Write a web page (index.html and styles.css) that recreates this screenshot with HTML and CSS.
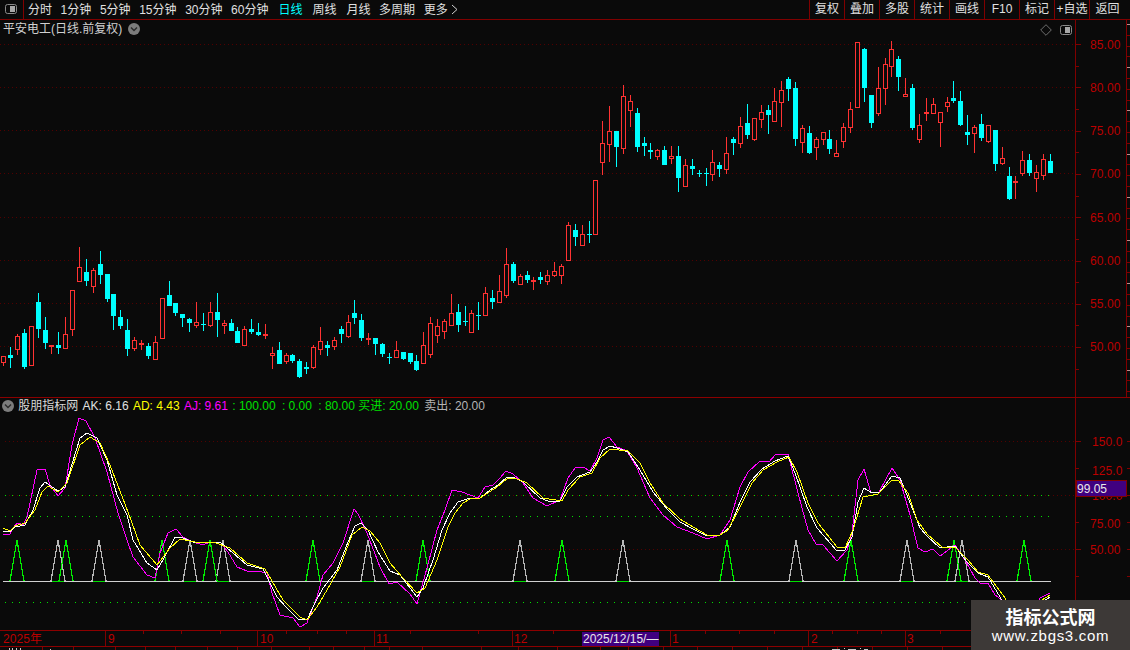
FILE: index.html
```html
<!DOCTYPE html>
<html lang="zh">
<head>
<meta charset="utf-8">
<title>平安电工 日线</title>
<link rel="stylesheet" href="styles.css">
</head>
<body>
<div class="app">
  <header class="topbar">
    <div class="toggle-cell">
      <svg class="split-icon" viewBox="0 0 12 10"><rect class="si-frame" x="0.5" y="0.5" width="11" height="9" rx="2"/><rect class="si-fill" x="5" y="2" width="5" height="6"/></svg>
    </div>
    <nav class="periods">
      <span>分时</span><span>1分钟</span><span>5分钟</span><span>15分钟</span><span>30分钟</span><span>60分钟</span>
      <span class="cn active">日线</span><span class="cn">周线</span><span class="cn">月线</span><span>多周期</span>
      <span class="more">更多
        <svg class="more-arrow" viewBox="0 0 7 11"><path d="M1 1l5 4.5-5 4.5"/></svg>
      </span>
    </nav>
    <nav class="tools">
      <span>复权</span><span>叠加</span><span>多股</span><span>统计</span><span>画线</span><span>F10</span><span>标记</span><span>+自选</span><span class="last">返回</span>
    </nav>
  </header>

  <section class="panel price">
    <div class="title-row">
      <span class="stock">平安电工</span><span class="stock-sub">(日线.前复权)</span>
      <svg class="chev" viewBox="0 0 12 12"><circle cx="6" cy="6" r="6"/><path d="M3 4.5L6 7.5 9 4.5"/></svg>
    </div>
    <div class="corner-icons">
      <svg class="diamond" viewBox="0 0 12 12"><path d="M6 .7L11.3 6 6 11.3 .7 6z"/></svg>
      <svg class="split-icon" viewBox="0 0 12 10"><rect class="si-frame" x="0.5" y="0.5" width="11" height="9" rx="2"/><rect class="si-fill" x="5" y="2" width="5" height="6"/></svg>
    </div>
    <svg class="chart price-chart" viewBox="0 20 1130 378">
      <g id="priceGrid"></g>
      <line class="axis" x1="1075.5" y1="20" x2="1075.5" y2="398"/>
      <line class="axis" x1="1126.5" y1="20" x2="1126.5" y2="398"/>
      <g id="priceTicks"></g>
      <text class="ax" x="1090" y="49">85.00</text>
      <text class="ax" x="1090" y="92">80.00</text>
      <text class="ax" x="1090" y="135">75.00</text>
      <text class="ax" x="1090" y="178">70.00</text>
      <text class="ax" x="1090" y="222">65.00</text>
      <text class="ax" x="1090" y="265">60.00</text>
      <text class="ax" x="1090" y="308">55.00</text>
      <text class="ax" x="1090" y="351">50.00</text>
      <g id="candles"></g>
      <line class="panel-line" x1="0" y1="397.5" x2="1130" y2="397.5"/>
    </svg>
  </section>

  <section class="panel indicator">
    <div class="title-row ind-row">
      <svg class="chev" viewBox="0 0 12 12"><circle cx="6" cy="6" r="6"/><path d="M3 4.5L6 7.5 9 4.5"/></svg>
      <span class="ind-name">股朋指标网</span>
      <span class="v-white">AK: 6.16</span>
      <span class="v-yellow">AD: 4.43</span>
      <span class="v-magenta">AJ: 9.61</span>
      <span class="v-green">: 100.00</span>
      <span class="v-green wide">: 0.00</span>
      <span class="v-green wide">: 80.00</span>
      <span class="v-green buy">买进: 20.00</span>
      <span class="v-grey">卖出: 20.00</span>
    </div>
    <svg class="chart ind-chart" viewBox="0 398 1130 232">
      <line class="grid" x1="5" y1="441.5" x2="1075" y2="441.5"/>
      <line class="grid" x1="5" y1="495.5" x2="1075" y2="495.5"/>
      <line class="grid" x1="5" y1="549.5" x2="1075" y2="549.5"/>
      <line class="gdots" x1="5" y1="495.5" x2="1052" y2="495.5"/>
      <line class="gdots" x1="5" y1="516.5" x2="1052" y2="516.5"/>
      <line class="gdots" x1="5" y1="602.5" x2="1052" y2="602.5"/>
      <line class="axis" x1="1075.5" y1="398" x2="1075.5" y2="630"/>
      <g id="indTicks"></g>
      <text class="ax" x="1092" y="446">150.0</text>
      <text class="ax" x="1092" y="475">125.0</text>
      <text class="ax" x="1092" y="500">100.0</text>
      <text class="ax" x="1090" y="528">75.00</text>
      <text class="ax" x="1090" y="554">50.00</text>
      <rect class="cursor-box" x="1076" y="480.5" width="50" height="16"/>
      <text class="cursor-text" x="1077" y="493">99.05</text>
      <g id="signals"></g>
      <line class="baseline" x1="3" y1="581.5" x2="1051" y2="581.5"/>
      <g id="signalBases"></g>
      <polyline id="lineAJ" class="ln ln-aj"/>
      <polyline id="lineAK" class="ln ln-ak"/>
      <polyline id="lineAD" class="ln ln-ad"/>
    </svg>
  </section>

  <footer class="dates">
    <svg class="chart date-chart" viewBox="0 630 1130 20">
      <line class="panel-line" x1="0" y1="630.5" x2="1130" y2="630.5"/>
      <line class="panel-line" x1="0" y1="646.5" x2="1130" y2="646.5"/>
      <g id="dateTicks"></g>
      <text class="ax" x="3" y="643">2025年</text>
      <text class="ax" x="108" y="643">9</text>
      <text class="ax" x="260" y="643">10</text>
      <text class="ax" x="376" y="643">11</text>
      <text class="ax" x="514" y="643">12</text>
      <text class="ax" x="672" y="643">1</text>
      <text class="ax" x="811" y="643">2</text>
      <text class="ax" x="907" y="643">3</text>
      <rect class="cursor-box date-box" x="582" y="632" width="77" height="14"/>
      <text class="cursor-text" x="583" y="643">2025/12/15/—</text>
      <path class="status-marks" d="M9 648.5h1M12 648.5h1M9 649.5h1M12 649.5h1M16 648.5h1M20 648.5h1M16 649.5h1M20 649.5h1M50 649.5h1M832 649.5h8M844 648.5h1M848 649.5h8M860 648.5h1M864 649.5h4"/>
    </svg>
  </footer>

  <aside class="watermark">
    <div class="wm-title">指标公式网</div>
    <div class="wm-url">www.zbgs3.com</div>
  </aside>
</div>
<script src="chart.js"></script>
</body>
</html>
```

FILE: styles.css
```css
* { box-sizing: border-box; }
html, body { margin: 0; padding: 0; background: #0a0a0a; }
body {
  font: 12px/14px "Liberation Sans", "Noto Sans CJK SC", sans-serif;
  color: #e0e0e0;
  overflow: hidden;
}
.app { position: relative; width: 1130px; height: 650px; overflow: hidden; display: flex; flex-direction: column; }

/* top bar */
.topbar { display: flex; height: 20px; border-bottom: 1px solid #800000; flex: none; }
.toggle-cell { width: 24px; border-right: 1px solid #800000; display: flex; align-items: center; justify-content: center; padding: 0 1px 1px 0; }
.split-icon { width: 12px; height: 10px; display: block; }
.si-frame { fill: #0a0a0a; stroke: #8a8a8a; }
.si-fill { fill: #a8a8a8; }
.periods { display: flex; align-items: center; gap: 8.6px; padding-left: 4px; white-space: nowrap; }
.periods .cn { margin-left: 1.4px; }
.periods .active { color: #00ffff; }
.more { display: flex; align-items: center; gap: 3px; }
.more-arrow { width: 7px; height: 11px; fill: none; stroke: #d0d0d0; }
.tools { display: flex; margin-left: auto; height: 19px; }
.tools span { width: 35px; border-left: 1px solid #800000; text-align: center; line-height: 18px; }
.tools .last { width: 41px; padding-right: 5px; }

/* panels */
.panel { position: relative; flex: none; }
.chart { display: block; width: 1130px; }
.price-chart { height: 378px; }
.ind-chart { height: 232px; }
.date-chart { height: 20px; }
.title-row { position: absolute; left: 3px; top: 2px; display: flex; align-items: center; height: 14px; color: #d0d0d0; white-space: nowrap; }
.chev { width: 12px; height: 12px; display: block; margin-left: 6px; }
.chev circle { fill: #7c7c7c; }
.chev path { fill: none; stroke: #2a2a2a; stroke-width: 1.4; }
.corner-icons { position: absolute; right: 58px; top: 4px; display: flex; align-items: center; gap: 8px; }
.diamond { width: 12px; height: 12px; display: block; fill: none; stroke: #6e6e6e; }

.ind-row { top: 1px; left: 2px; gap: 4.3px; }
.ind-row .chev { margin-left: 0; }
.ind-name { color: #d8d8d8; }
.v-white { color: #e0e0e0; }
.v-yellow { color: #ffff00; }
.v-magenta { color: #ff00ff; }
.v-green { color: #00e000; }
.v-green.wide { margin-left: 2px; }
.v-green.buy { margin-left: -1px; }
.v-grey { color: #b4b4b4; margin-left: 1px; }

/* chart marks */
.grid { stroke: #520000; stroke-dasharray: 1 3; shape-rendering: crispEdges; }
.gdots { stroke: #00e000; stroke-dasharray: 1.4 5.6; shape-rendering: crispEdges; }
.axis { stroke: #800000; shape-rendering: crispEdges; }
.panel-line { stroke: #8c0000; shape-rendering: crispEdges; }
.tick { stroke: #800000; shape-rendering: crispEdges; }
.tick-light { stroke: #b89090; shape-rendering: crispEdges; }
.ax { fill: #bb0000; font: 12px "Liberation Sans", "Noto Sans CJK SC", sans-serif; letter-spacing: 0.1px; }
.cursor-box { fill: #400080; stroke: #800000; shape-rendering: crispEdges; }
.date-box { stroke: none; }
.cursor-text { fill: #e8e8e8; font: 12px "Liberation Sans", sans-serif; }
.status-marks { stroke: #c8c8c8; shape-rendering: crispEdges; }

.wick { shape-rendering: crispEdges; stroke-width: 1; }
.wick.up, .body.up { stroke: #ff3232; }
.wick.dn { stroke: #00ffff; }
.body { shape-rendering: crispEdges; }
.body.up { fill: #0a0a0a; }
.body.dn { fill: #00ffff; }

.tri { fill: none; shape-rendering: crispEdges; stroke-width: 1.2; }
.tri.buy { stroke: #00f000; }
.tri.sell { stroke: #b8b8b8; }
.base-green { stroke: #00e000; shape-rendering: crispEdges; }
.baseline { stroke: #d0d0d0; shape-rendering: crispEdges; }
.ln { fill: none; shape-rendering: crispEdges; stroke-width: 1; }
.ln-aj { stroke: #ff00ff; }
.ln-ak { stroke: #ffffff; }
.ln-ad { stroke: #ffff00; }

/* watermark */
.watermark { position: absolute; left: 971px; top: 600px; width: 159px; height: 50px; background: #3d3937; color: #fff; text-align: center; }
.wm-title { font: bold 18px/20px "Noto Sans CJK SC", sans-serif; margin-top: 6px; }
.wm-url { font: 15px/18px "Liberation Sans", sans-serif; margin-top: 1px; letter-spacing: 0.7px; }
```

FILE: chart.js
```js
/* Candles: [rising, wickTop, bodyTop, bodyBottom, wickBottom], read at 3x scale
   relative to a group's y origin. X follows the candle index. */
var groups = [
  { oy: 240, c: [
    [1,349,349,368,378],[0,321,345,353,384],[1,282,288,330,345],[0,267,279,381,386],[1,259,259,377,377],
    [0,159,186,267,294],[0,232,270,309,327],[1,315,315,318,342],[0,277,315,324,342],[1,231,282,326,327],
    [1,151,151,269,288],[1,21,82,125,126],[0,57,96,123,138],[1,84,90,140,159],[0,33,72,105,132],
    [0,102,102,177,186],[0,162,162,228,270],[0,210,231,258,267],[0,237,270,327,348],[1,291,300,327,333],
    [1,300,310,315,330],[0,309,318,348,357],[1,288,306,359,360],[1,174,174,297,297],[0,123,165,198,198],
    [0,189,189,219,228],[0,222,222,234,261],[0,234,237,249,276],[1,186,246,258,264],[0,219,252,255,273],
    [1,186,216,258,261],[0,159,216,240,291],[1,240,249,258,282],[0,237,249,273,273],[0,261,273,309,309],
    [1,258,267,318,318],[0,237,267,276,282],[0,249,276,285,288],[1,252,282,288,297],[1,321,339,347,387],
    [0,306,330,372,372] ] },
  { oy: 220, c: [
    [1,399,405,426,432],[0,402,405,423,429],[0,417,423,471,474],[0,426,441,447,462],[1,375,381,444,447],
    [1,321,363,389,405],[0,363,375,384,408],[1,351,360,381,390],[0,318,327,342,369],[1,285,306,350,354],
    [0,240,279,294,312],[0,282,300,354,363],[1,339,354,357,375],[0,354,354,372,405],[0,369,372,402,411],
    [0,399,411,414,432],[1,363,390,413,414],[0,396,396,417,420],[0,399,399,426,432],[0,405,423,450,453],
    [1,336,375,432,432],[1,291,309,404,414],[1,297,318,348,369],[1,297,303,335,357],[1,222,279,318,318],
    [0,252,276,315,336],[0,258,303,306,318],[1,270,279,339,339],[0,246,285,288,330],[1,201,219,288,288],
    [0,210,234,246,267],[1,165,213,249,249],[1,84,132,228,234],[0,126,132,183,189],[1,162,168,195,195],
    [0,153,165,180,189],[1,171,180,183,210],[0,156,171,180,192],[1,150,165,186,195],[1,126,153,168,171],
    [1,132,138,168,192],[1,6,15,123,123],[0,12,30,51,78],[1,15,42,78,78],[0,3,42,45,69],
    [1,-120,-120,45,45] ] },
  { oy: 80, c: [
    [1,123,190,250,285],[1,78,154,196,246],[0,154,154,201,261],[1,15,49,208,222],[1,45,64,92,141],
    [0,84,99,201,216],[0,171,189,198,228],[0,189,210,216,237],[1,207,210,231,240],[0,198,210,255,255],
    [1,198,228,236,252],[0,198,228,294,336],[1,237,256,320,321],[0,237,258,267,285],[0,270,280,282,291],
    [0,264,279,282,318],[1,210,246,285,303],[0,246,255,267,291],[1,171,219,270,282],[0,171,177,189,225],
    [1,111,138,191,204],[0,72,129,165,177],[1,114,114,180,183],[1,75,96,120,144],[0,75,90,105,162],
    [1,24,64,126,126],[1,3,30,68,141],[0,-10,-3,27,63],[0,6,24,177,198],[1,135,144,189,219],
    [0,138,159,219,222],[1,171,177,204,240],[1,156,156,180,195],[0,150,177,207,222],[1,180,220,231,231] ] },
  { oy: 35, c: [
    [1,264,276,321,339],[1,201,222,279,294],[1,21,21,219,219],[0,39,42,159,201],[0,180,180,264,279],
    [1,96,159,237,243],[1,69,87,162,210],[1,18,42,96,126],[0,63,72,126,168],[1,129,177,186,186],
    [0,147,159,279,285],[1,237,270,315,324],[1,189,231,237,258],[1,189,207,237,237],[1,231,231,264,336],
    [1,186,201,216,231],[0,138,189,198,204],[0,168,198,270,273],[0,240,291,300,330],[1,270,276,297,354],
    [0,237,267,309,318],[1,270,270,321,324],[0,285,285,387,408],[1,336,369,387,390],[0,396,423,492,495],
    [1,423,438,442,492],[1,348,375,417,423],[0,357,375,414,423],[1,390,411,432,471],[1,357,372,423,435],
    [0,357,378,414,414] ] }
];

var svgMarkup = "";
var index = 0;
groups.forEach(function (g) {
  g.c.forEach(function (k) {
    var x = Math.round(3.3 + 6.885 * index);
    var cx = x + 0.5;
    var y = k.slice(1).map(function (v) { return Math.round(g.oy + v / 3); });
    var kind = k[0] ? "up" : "dn";
    if (y[0] < y[3]) {
      svgMarkup += '<line class="wick ' + kind + '" x1="' + cx + '" x2="' + cx + '" y1="' + y[0] + '" y2="' + y[3] + '"/>';
    }
    if (k[0]) {
      var h = Math.max(1, y[2] - y[1] - 1);
      svgMarkup += '<rect class="body up" x="' + (x - 1.5) + '" y="' + (y[1] + 0.5) + '" width="4" height="' + h + '"/>';
    } else {
      svgMarkup += '<rect class="body dn" x="' + (x - 2) + '" y="' + y[1] + '" width="5" height="' + Math.max(1, y[2] - y[1]) + '"/>';
    }
    index++;
  });
});
document.getElementById("candles").innerHTML = svgMarkup;

/* Indicator lines, page coordinates */
var AJ = "3,534 10,534 15,525 18,523 23,525 27,517 37,470 45,469 50,485 58,496 65,488 72,445 79,418 86,421 95,438 107,472 118,513 127,540 133,557 147,575 155,578 160,553 168,533 176,529 183,537 193,542 203,545 210,542 220,542 228,552 237,567 247,571 257,571 267,573 272,593 280,615 293,618 300,627 307,623 317,597 323,575 333,563 343,543 354,509 358,514 367,533 380,567 389,584 397,582 410,594 417,604 427,568 437,530 445,510 452,490 462,492 478,498 485,487 493,485 500,478 506,471 513,474 523,483 533,498 547,506 560,500 568,478 575,468 583,467 590,471 597,458 603,440 609,437 617,447 627,451 637,468 650,498 663,515 677,527 693,533 707,539 720,535 730,520 740,487 748,472 760,461 769,462 776,454 788,454 798,493 808,530 816,544 823,545 837,561 847,550 852,533 858,480 864,469 871,493 879,492 892,468 900,480 910,515 918,548 925,552 933,549 940,556 955,545 965,560 975,578 980,583 988,583 995,595 1002,600 1010,614 1034,614 1040,598 1050,593";
var AK = "3,531 10,532 15,527 25,525 33,510 40,488 45,482 58,491 65,487 80,438 87,433 97,438 107,460 117,495 127,515 133,540 147,563 157,570 163,560 175,537 183,538 193,542 210,542 220,542 233,553 247,565 263,569 277,597 287,608 298,619 307,620 315,603 323,588 337,570 348,542 355,526 361,523 368,530 378,552 390,571 400,575 417,597 423,588 433,560 442,530 450,513 458,502 467,499 480,498 490,490 498,485 507,477 513,477 523,482 540,498 548,501 560,501 567,487 577,477 590,472 597,462 603,450 610,446 617,448 628,452 640,470 653,492 668,510 680,522 693,529 707,536 720,535 730,527 740,502 750,482 762,469 775,461 788,456 795,473 807,507 817,528 837,551 845,550 852,537 858,502 864,488 872,493 880,492 892,476 900,478 913,510 920,528 927,536 940,548 955,546 967,562 978,573 988,577 1003,602 1012,614 1034,614 1042,602 1050,597";
var AD = "3,528 10,531 15,526 25,523 35,510 42,492 48,486 58,492 67,483 80,445 90,437 100,443 110,465 128,512 140,545 157,565 170,548 180,539 200,543 213,542 230,548 247,563 265,569 283,600 300,617 307,620 317,607 327,590 340,567 352,535 362,527 370,531 380,543 390,563 403,578 417,593 425,588 437,560 448,527 455,513 463,503 470,499 480,498 497,487 508,478 515,478 527,483 543,498 562,501 568,490 580,477 592,473 600,458 610,449 628,451 640,463 650,483 663,503 680,519 693,527 707,535 720,535 728,530 740,507 752,483 763,470 777,462 789,457 797,472 808,503 818,523 837,547 845,548 853,530 863,497 878,494 892,480 898,480 908,493 917,520 927,534 942,547 955,547 968,560 978,572 988,575 1005,598 1014,614 1034,614 1042,600 1050,595";
document.getElementById("lineAJ").setAttribute("points", AJ);
document.getElementById("lineAK").setAttribute("points", AK);
document.getElementById("lineAD").setAttribute("points", AD);

/* Buy and sell signals: triangles on the 20 line */
var buys = [17, 66, 162, 210, 313, 423, 562, 727, 851, 954, 1024];
var sells = [58, 99, 190, 223, 368, 520, 623, 796, 907, 962];
function triangle(x, cls) {
  return '<polyline class="tri ' + cls + '" points="' + (x - 7) + ',581 ' + x + ',540 ' + (x + 7) + ',581"/>';
}
document.getElementById("signals").innerHTML =
  sells.map(function (x) { return triangle(x, "sell"); }).join("") +
  buys.map(function (x) { return triangle(x, "buy"); }).join("");
document.getElementById("signalBases").innerHTML = sells.map(function (x) {
  return '<line class="base-green" x1="' + (x - 6) + '" x2="' + (x + 6) + '" y1="581.5" y2="581.5"/>';
}).join("");

/* Gridlines and axis ticks */
function hline(cls, x1, x2, y) {
  return '<line class="' + cls + '" x1="' + x1 + '" x2="' + x2 + '" y1="' + y + '" y2="' + y + '"/>';
}
function vline(cls, x, y1, y2) {
  return '<line class="' + cls + '" x1="' + x + '" x2="' + x + '" y1="' + y1 + '" y2="' + y2 + '"/>';
}
var gridY = [44, 87, 130, 173, 217, 260, 303, 346];
document.getElementById("priceGrid").innerHTML = gridY.map(function (y) {
  return hline("grid", 0, 1075, y + 0.5);
}).join("");

var ticks = "";
for (var i = 0; i < 16; i++) {
  var ty = Math.round(44 + i * 21.65) + 0.5;
  ticks += hline("tick", 1075, i % 2 ? 1079 : 1081, ty);
}
for (var j = 0; j < 35; j++) {
  var ry = Math.round(24 + j * 10.8) + 0.5;
  ticks += hline(j % 4 === 0 ? "tick-light" : "tick", 1127, 1130, ry);
}
document.getElementById("priceTicks").innerHTML = ticks;

var iTicks = "";
for (var m = 0; m < 7; m++) {
  var iy = 441 + m * 27 + 0.5;
  iTicks += hline("tick", 1075, m % 2 ? 1079 : 1081, iy);
  iTicks += hline("tick", 1127, 1130, iy);
}
document.getElementById("indTicks").innerHTML = iTicks;

var dateFull = [105, 257, 374, 512, 670, 808, 905];
var dateMinor = [143, 181, 220, 286, 317, 346, 410, 478, 553, 622, 705, 739, 774, 832, 857, 881, 940];
var below = [42, 73, 115, 145, 175, 207, 237, 271, 309, 333, 364, 389, 422, 481, 518, 557, 600, 628, 663, 697, 732, 767, 802, 837, 872, 907, 942];
var dateMarks = dateFull.map(function (x) { return vline("tick", x + 0.5, 631, 646); }).join("") +
  dateMinor.map(function (x) { return vline("tick", x + 0.5, 631, 634); }).join("") +
  below.map(function (x) { return vline("tick", x + 0.5, 647, 650); }).join("");
document.getElementById("dateTicks").innerHTML = dateMarks;
```
